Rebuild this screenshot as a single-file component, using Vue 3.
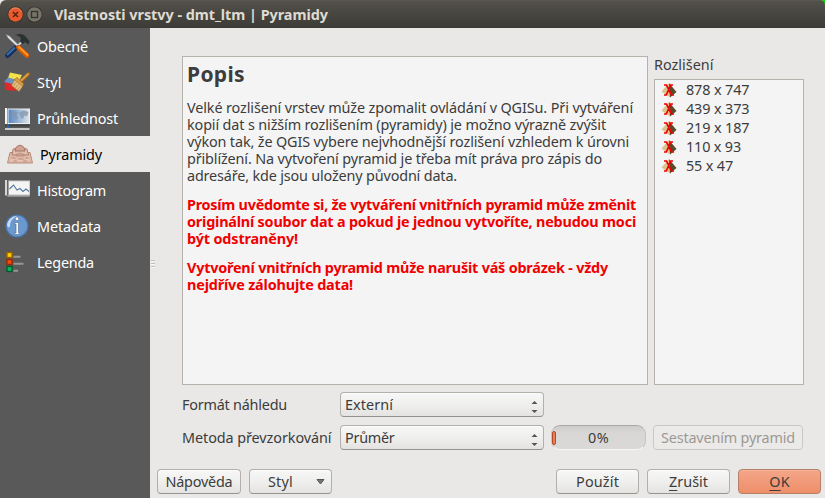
<script setup>
const tabs = [
  { id: 'general', label: 'Obecné', width: 51 },
  { id: 'style', label: 'Styl', width: 24.5 },
  { id: 'transparency', label: 'Průhlednost', width: 81 },
  { id: 'pyramids', label: 'Pyramidy', width: 62, active: true },
  { id: 'histogram', label: 'Histogram', width: 69 },
  { id: 'metadata', label: 'Metadata', width: 64 },
  { id: 'legend', label: 'Legenda', width: 57 },
]

const description = [
  { text: 'Velké rozlišení vrstev může zpomalit ovládání v QGISu. Při vytváření', width: 446 },
  { text: 'kopií dat s nižším rozlišením (pyramidy) je možno výrazně zvýšit', width: 419 },
  { text: 'výkon tak, že QGIS vybere nejvhodnější rozlišení vzhledem k úrovni', width: 442 },
  { text: 'přiblížení. Na vytvoření pyramid je třeba mít práva pro zápis do', width: 415 },
  { text: 'adresáře, kde jsou uloženy původní data.', width: 270 },
]

const warnings = [
  [
    { text: 'Prosím uvědomte si, že vytváření vnitřních pyramid může změnit', width: 449 },
    { text: 'originální soubor dat a pokud je jednou vytvoříte, nebudou moci', width: 449 },
    { text: 'být odstraněny!', width: 111 },
  ],
  [
    { text: 'Vytvoření vnitřních pyramid může narušit váš obrázek - vždy', width: 421 },
    { text: 'nejdříve zálohujte data!', width: 166 },
  ],
]

const resolutions = [
  { text: '878 x 747', width: 63.5 },
  { text: '439 x 373', width: 63.5 },
  { text: '219 x 187', width: 63.5 },
  { text: '110 x 93', width: 55 },
  { text: '55 x 47', width: 47 },
]

// Spreads the tracking of a line so that it fills the given width.
const vFit = {
  mounted(el, { value }) {
    const natural = el.getBoundingClientRect().width
    el.style.letterSpacing = `${(value - natural) / el.textContent.length}px`
  },
}
</script>

<template>
  <div class="window">
    <header class="titlebar">
      <svg class="controls" width="46" height="28" viewBox="0 0 46 28">
        <circle cx="15.5" cy="14.5" r="8" fill="#35332d" />
        <circle cx="15.5" cy="14.5" r="7.2" fill="#e9592e" />
        <path d="M9.5 12a6.5 6.5 0 0 1 12 0" fill="none" stroke="#f58a62" />
        <path d="M13 12l5 5M18 12l-5 5" stroke="#55220f" stroke-width="1.5" />
        <circle cx="34.5" cy="14.5" r="8" fill="#35332d" />
        <circle cx="34.5" cy="14.5" r="7.2" fill="#75736a" />
        <rect x="31.5" y="11.5" width="6" height="6" fill="none" stroke="#35332d" stroke-width="1.3" />
      </svg>
      <h1><span v-fit="274">Vlastnosti vrstvy - dmt_ltm | Pyramidy</span></h1>
      <svg class="corner" width="5" height="5" viewBox="0 0 5 5"><path d="M0 0h5v5Q4.500 .500 0 0z" fill="#10d010" /></svg>
    </header>

    <div class="body">
      <nav class="sidebar">
        <div v-for="tab in tabs" :key="tab.id" class="tab" :class="{ active: tab.active }">
          <svg v-if="tab.id === 'general'" class="tab-icon" viewBox="0 0 26 26">
            <path d="M1 1.500l3.500 1.500 9 9-1.500 1.500L3 5z" fill="#e2e5e3" stroke="#777" stroke-width=".5" />
            <path d="M10 2c5-2 9-1 11 2l3.500 4.500-1 3-3.500-2.500-2 2-3-2 1-3.500c-2-3-4-3-6-3.500z" fill="#2a3232" />
            <path d="M16 9.500l-5 5" stroke="#ccd0d0" stroke-width="2" />
            <path d="M10.500 15L2.500 22.500" stroke="#102f5c" stroke-width="4.800" stroke-linecap="round" />
            <path d="M9.500 15L2.500 21.500" stroke="#396fae" stroke-width="2" stroke-linecap="round" />
            <path d="M13.500 14.500l8.500 8" stroke="#d95a00" stroke-width="4.800" stroke-linecap="round" />
            <path d="M14 14l8.500 8" stroke="#ff9a2a" stroke-width="1.800" stroke-linecap="round" />
          </svg>
          <svg v-else-if="tab.id === 'style'" class="tab-icon" viewBox="0 0 26 26">
            <path d="M5 3.500l12 2.500-3 6-11-3z" fill="#f3e14b" />
            <path d="M3 8.500l10 2.500-3 6-11-4z" fill="#6b91c4" />
            <path d="M-.500 13l12 3 0 6-11.500-1z" fill="#dc2a2a" />
            <path d="M23.500 5L16 12.500" stroke="#9a641d" stroke-width="3.600" stroke-linecap="round" />
            <path d="M23 5L16 11.500" stroke="#dba24d" stroke-width="1.800" stroke-linecap="round" />
            <path d="M12 8.500l7 6.500-2 3-8-7z" fill="#d99a45" stroke="#8b5e24" stroke-width=".6" />
            <path d="M9.500 11l8 6.500-3.500 5-7.500-6z" fill="#e4bd7e" stroke="#a87935" stroke-width=".6" />
            <path d="M11 13.500l-3 4m5-2l-3 4m5-2l-3 4" stroke="#b58444" stroke-width=".7" />
          </svg>
          <svg v-else-if="tab.id === 'transparency'" class="tab-icon" viewBox="0 0 26 26">
            <defs>
              <linearGradient id="sky" x2="1" y2="0">
                <stop offset="0" stop-color="#5585c1" />
                <stop offset="1" stop-color="#dfe6ea" />
              </linearGradient>
            </defs>
            <path d="M1 3v16" stroke="#f4f4f4" stroke-width="2" />
            <rect x="3" y="4" width="21.500" height="14.500" fill="url(#sky)" stroke="#ededed" />
            <path d="M5.500 8l4-2 4 1.500-2.500 2.500 2 2-2 4-1.500-3-2-2.500zM14 7.500l5-2 4.500 1.500-1 3.500-2 1-1-1.500-1.500 4-2-1-1-3z" fill="#8496aa" opacity=".75" />
            <path d="M0 20.500h24.500" stroke="#404346" stroke-width="2" />
            <path d="M0 24h24.500" stroke="#eee" stroke-width="1.500" />
            <path d="M3 19v4" stroke="#2f65a5" stroke-width="2" />
          </svg>
          <svg v-else-if="tab.id === 'pyramids'" class="tab-icon" viewBox="0 0 26 26">
            <path d="M3 11.500h20l2.500 10.500H.500z" fill="#e0b9a9" stroke="#b08472" stroke-width=".9" />
            <path d="M6 8q7-3 14 0l1.500 6H5z" fill="#e4bcab" stroke="#a87b6a" stroke-width=".9" />
            <path d="M9 6.500q4-4.500 8 0l1 3.500H8z" fill="#d3a493" stroke="#9c7060" stroke-width=".9" />
            <path d="M9 13.500q4-3 8 0v1.500H9zM4.500 17h4m3 1h5m2-1h3M6.500 20h3m7 0h4" fill="none" stroke="#b88c7b" stroke-width=".9" />
            <path d="M3 19h4m4 .500h4m4-.500h3" stroke="#efd0c2" stroke-width=".8" />
          </svg>
          <svg v-else-if="tab.id === 'histogram'" class="tab-icon" viewBox="0 0 26 26">
            <rect x="3.500" y="4" width="21" height="14" fill="#f4f4f2" stroke="#ccc" />
            <path d="M1 3v15.500" stroke="#e4e4e4" stroke-width="1.800" />
            <path d="M3 3v15.500" stroke="#777" />
            <path d="M2.500 18.800h22" stroke="#a6a6a6" stroke-width="1.800" />
            <path d="M4.500 12l4-4 3.500 5 3-1.500 3 3 3-2.500 3 2.500" fill="none" stroke="#5478a4" stroke-width="1.100" />
          </svg>
          <svg v-else-if="tab.id === 'metadata'" class="tab-icon" viewBox="0 0 26 26">
            <circle cx="12" cy="13" r="11" fill="#6a98cf" stroke="#4775ab" stroke-width="1.200" />
            <path d="M2 12.500A10 10 0 0 1 13 3Q5 5.500 5 13Q4 16 2 12.500z" fill="#c9daee" />
            <circle cx="12" cy="5.800" r="1.900" fill="#f5f7fa" stroke="#496b95" stroke-width=".6" />
            <path d="M9.500 9.500h4V20h1.500v1.500H9.500V20H11v-9H9.500z" fill="#f5f7fa" stroke="#496b95" stroke-width=".6" />
          </svg>
          <svg v-else class="tab-icon" viewBox="0 0 26 26">
            <path d="M8.500 7.800h7M8.500 14.800h10M8.500 21.800h4.500" stroke="#979797" stroke-width="2" />
            <rect x="2" y="3.500" width="5" height="5" fill="#ffd000" stroke="#a06000" stroke-width="1.300" />
            <rect x="2" y="10.500" width="5" height="5" fill="#f34b0a" stroke="#9b2500" stroke-width="1.300" />
            <rect x="2" y="17.500" width="5" height="5" fill="#08b55b" stroke="#005c2c" stroke-width="1.300" />
          </svg>
          <span v-fit="tab.width">{{ tab.label }}</span>
        </div>
      </nav>

      <div class="splitter"><i></i><i></i><i></i></div>

      <main class="content">
        <div class="panes">
          <article class="description">
            <h2><span v-fit="58">Popis</span></h2>
            <p>
              <span v-for="line in description" :key="line.text" class="line"><span v-fit="line.width">{{ line.text }}</span></span>
            </p>
            <p v-for="(warning, i) in warnings" :key="i" class="warning">
              <span v-for="line in warning" :key="line.text" class="line"><span v-fit="line.width">{{ line.text }}</span></span>
            </p>
          </article>
          <section class="resolutions">
            <h3><span v-fit="59.5">Rozlišení</span></h3>
            <ul>
              <li v-for="item in resolutions" :key="item.text">
                <svg width="16" height="16" viewBox="0 0 16 16">
                  <path d="M8 1L.500 9.500 9 15.500z" fill="#d9c48e" />
                  <path d="M8 1l7.500 9L9 15.500z" fill="#5a492a" />
                  <path d="M3 3h2.500l5 10H13M12 3H9.800L5.200 13H3" fill="none" stroke="#f00000" stroke-width="1.700" />
                </svg>
                <span v-fit="item.width">{{ item.text }}</span>
              </li>
            </ul>
          </section>
        </div>

        <div class="form">
          <div class="row">
            <label><span v-fit="105">Formát náhledu</span></label>
            <div class="control select">
              <span v-fit="48">Externí</span>
              <svg width="7" height="14" viewBox="0 0 7 14"><path d="M.500 4L3.500 1l3 3zM.500 10l3 3 3-3z" fill="#555" /></svg>
            </div>
          </div>
          <div class="row">
            <label><span v-fit="149.5">Metoda převzorkování</span></label>
            <div class="control select">
              <span v-fit="49.5">Průměr</span>
              <svg width="7" height="14" viewBox="0 0 7 14"><path d="M.500 4L3.500 1l3 3zM.500 10l3 3 3-3z" fill="#555" /></svg>
            </div>
            <div class="progress"><i></i><span v-fit="21">0%</span></div>
            <button class="control build" disabled><span v-fit="134">Sestavením pyramid</span></button>
          </div>
        </div>

        <footer class="actions">
          <button class="control help"><span v-fit="67">Nápověda</span></button>
          <button class="control menu">
            <span v-fit="25">Styl</span>
            <svg width="9" height="6" viewBox="0 0 9 6"><path d="M1 .500h7L4.500 5z" fill="#777" stroke="#555" /></svg>
          </button>
          <button class="control apply"><span v-fit="43">Použít</span></button>
          <button class="control"><span v-fit="39"><u>Z</u>rušit</span></button>
          <button class="control primary"><span v-fit="20.5"><u>O</u>K</span></button>
        </footer>
      </main>
    </div>
  </div>
</template>

<style>
body {
  margin: 0;
  background: #e9e8e6;
}
</style>

<style scoped>
* {
  box-sizing: border-box;
}
.window {
  width: 825px;
  height: 498px;
  display: flex;
  flex-direction: column;
  overflow: hidden;
  background: #e9e8e6;
  color: #3c3c3c;
  font: 14.4px/17px "Noto Sans", "Open Sans", sans-serif;
  white-space: nowrap;
}
.titlebar {
  height: 28px;
  display: flex;
  align-items: center;
  background: linear-gradient(#5a5850 0, #514f48 8%, #3c3b37 100%);
  border-radius: 6px 0 0 0;
}
.controls {
  flex: none;
}
.corner {
  align-self: flex-start;
  margin-left: auto;
}
h1,
h2,
h3,
p,
ul {
  margin: 0;
  padding: 0;
}
h1 {
  padding: 2px 0 0 8px;
  font-size: 14.4px;
  line-height: 20px;
  font-weight: 700;
  color: #dfdbd2;
}
.body {
  flex: 1;
  display: flex;
  min-height: 0;
}
.sidebar {
  width: 150px;
  background: #595959;
  color: #fff;
}
.tab {
  height: 36px;
  display: flex;
  align-items: center;
  gap: 6px;
  padding: 1px 0 0 5px;
}
.tab.active {
  padding-left: 7px;
  gap: 7px;
  background: #e9e8e6;
  color: #000;
}
.tab-icon {
  flex: none;
  width: 26px;
  height: 26px;
  margin-top: -1px;
  overflow: visible;
}
.splitter {
  width: 6px;
  display: flex;
  flex-direction: column;
  gap: 2px;
  align-items: center;
  padding-top: 232px;
}
.splitter i {
  width: 4px;
  height: 1px;
  background: #c2c0bd;
  box-shadow: 0 1px #f8f8f8;
}
.content {
  flex: 1;
  display: flex;
  flex-direction: column;
  padding-top: 28px;
}
.panes {
  height: 329px;
  display: flex;
  gap: 6px;
  padding-left: 26px;
}
.description {
  width: 466px;
  padding: 5px 4px;
  border: 1px solid #b6b3ad;
  background: #f4f4f4;
}
h2 {
  margin-bottom: 13px;
  font-size: 21px;
  line-height: 24px;
}
p {
  margin-bottom: 12px;
}
.line {
  display: block;
}
.warning {
  color: #f00000;
  font-weight: 700;
}
.resolutions {
  width: 150px;
  display: flex;
  flex-direction: column;
}
h3 {
  height: 23px;
  font-size: 14.4px;
  line-height: 18px;
  font-weight: 400;
}
ul {
  flex: 1;
  list-style: none;
  border: 1px solid #b6b3ad;
  background: #f4f4f4;
}
li {
  height: 19px;
  display: flex;
  align-items: center;
  gap: 9px;
  padding-left: 6px;
}
.form {
  display: flex;
  flex-direction: column;
  gap: 8px;
  padding: 7px 0 0 26px;
}
.row {
  display: flex;
  align-items: center;
}
label {
  width: 158px;
}
.control {
  height: 25px;
  display: flex;
  align-items: center;
  justify-content: center;
  padding: 0;
  border: 1px solid #b3b0ac;
  border-bottom-color: #96938f;
  border-radius: 4px;
  background: linear-gradient(#f7f7f7, #efefee 50%, #e4e3e1);
  box-shadow: inset 0 1px #fbfbfb;
  color: #3c3c3c;
  font: inherit;
}
.select {
  width: 204px;
  justify-content: space-between;
  padding: 0 5px 0 4px;
}
.select svg {
  margin-top: 4px;
}
.progress {
  width: 95px;
  height: 25px;
  display: grid;
  align-items: center;
  justify-items: center;
  margin-left: 7px;
  border: 1px solid #c5c3c0;
  border-top-color: #aaa8a4;
  border-bottom-color: #f5f5f5;
  border-radius: 9px;
  background: linear-gradient(#cfcdcb, #d8d7d5 30%, #dbd9d7);
}
.progress > * {
  grid-area: 1 / 1;
}
.progress i {
  justify-self: start;
  width: 4px;
  height: 14px;
  border: 1px solid #b5492a;
  border-radius: 2px;
  background: #ef7d52;
}
.build {
  width: 150px;
  margin-left: 7px;
  border-color: #c9c7c4;
  background: #ebeae8;
  box-shadow: none;
  color: #9b9995;
}
.actions {
  display: flex;
  gap: 8px;
  margin-top: 19px;
}
.actions .control {
  width: 83px;
}
.actions .help {
  width: 84px;
  margin-left: 1px;
}
.actions .menu {
  justify-content: space-between;
  padding: 0 6px 0 18px;
}
.actions .apply {
  margin-left: auto;
}
.actions .primary {
  margin-right: 4px;
  border-color: #b58068;
  background: linear-gradient(#f4a689, #ee8e69);
  box-shadow: inset 0 1px #f7b49b;
}
u {
  text-underline-offset: 3px;
  text-decoration-thickness: 1px;
  text-decoration-skip-ink: none;
}
</style>
